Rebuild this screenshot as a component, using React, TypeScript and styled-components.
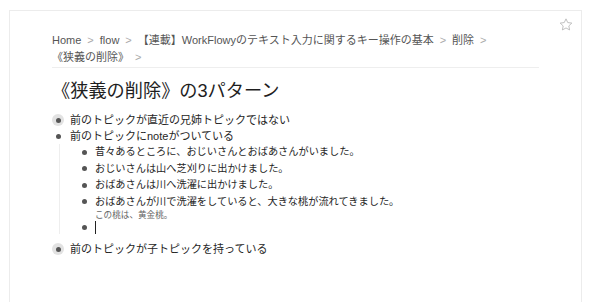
import React from "react";
import styled, { createGlobalStyle } from "styled-components";

const GlobalStyle = createGlobalStyle`
  body {
    margin: 0;
    background: #ffffff;
    font-family: "Liberation Sans", "Noto Sans CJK JP", sans-serif;
    color: #333;
  }
`;

const Page = styled.div`
  padding: 10px 16px 0 9px;
  height: 292px;
  overflow: hidden;
`;

const Panel = styled.div`
  border: 1px solid #ececec;
  border-bottom: none;
  height: 300px;
  padding: 0 8px 0 42px;
`;

const TopBar = styled.div`
  display: flex;
  justify-content: flex-end;
  padding-top: 7px;
  height: 13px;
`;

const Crumbs = styled.div`
  margin: 1px 34px 0 0;
  padding-bottom: 1px;
  border-bottom: 1px solid #eeeeee;
  font-size: 11px;
  line-height: 17px;
  color: #555;
`;

const Sep = styled.span`
  color: #aaa;
  margin: 0 6px;
`;

const Title = styled.h1`
  margin: 11px 0 0;
  font-size: 18.2px;
  line-height: 24px;
  font-weight: normal;
  color: #1e1e1e;
`;

const Outline = styled.div`
  margin-top: 9px;
`;

const Row = styled.div<{ $child?: boolean }>`
  display: flex;
  align-items: center;
  gap: ${(p) => (p.$child ? "5px" : "6px")};
  font-size: ${(p) => (p.$child ? "10.2px" : "11px")};
  line-height: ${(p) => (p.$child ? "16.5px" : "16px")};
  color: #262626;
`;

const Bullet = styled.span<{ $halo?: boolean }>`
  flex: none;
  width: 12px;
  height: 12px;
  border-radius: 50%;
  display: flex;
  align-items: center;
  justify-content: center;
  background: ${(p) => (p.$halo ? "#e2e2e2" : "transparent")};

  &::after {
    content: "";
    width: 5px;
    height: 5px;
    border-radius: 50%;
    background: #555;
  }
`;

const Children = styled.div`
  margin: 0 0 7px 7px;
  padding-left: 18px;
  border-left: 1px solid #eeeeee;
`;

const Note = styled.div`
  margin-left: 17px;
  font-size: 8.6px;
  line-height: 11px;
  color: #666;
`;

const Caret = styled.span`
  display: inline-block;
  width: 1px;
  height: 13px;
  background: #222;
`;

const Star = () => (
  <svg width="14" height="13" viewBox="0 0 24 23" fill="none" stroke="#b0b0b0" strokeWidth="1.4" strokeLinejoin="round">
    <path d="M12 1.5l3.1 6.6 7.2.9-5.3 5 1.4 7.1L12 17.6l-6.4 3.5L7 14l-5.3-5 7.2-.9z" />
  </svg>
);

const children = [
  "昔々あるところに、おじいさんとおばあさんがいました。",
  "おじいさんは山へ芝刈りに出かけました。",
  "おばあさんは川へ洗濯に出かけました。",
];

const App = () => {
  return (
    <>
      <GlobalStyle />
      <Page>
        <Panel>
          <TopBar>
            <Star />
          </TopBar>
          <Crumbs>
            Home<Sep>&gt;</Sep>flow<Sep>&gt;</Sep>【連載】WorkFlowyのテキスト入力に関するキー操作の基本<Sep>&gt;</Sep>削除<Sep>&gt;</Sep>
            <br />
            《狭義の削除》<Sep>&gt;</Sep>
          </Crumbs>
          <Title>《狭義の削除》の3パターン</Title>
          <Outline>
            <Row>
              <Bullet $halo />
              前のトピックが直近の兄姉トピックではない
            </Row>
            <Row>
              <Bullet />
              前のトピックにnoteがついている
            </Row>
            <Children>
              {children.map((t) => (
                <Row $child key={t}>
                  <Bullet />
                  {t}
                </Row>
              ))}
              <Row $child>
                <Bullet />
                おばあさんが川で洗濯をしていると、大きな桃が流れてきました。
              </Row>
              <Note>この桃は、黄金桃。</Note>
              <Row $child>
                <Bullet />
                <Caret />
              </Row>
            </Children>
            <Row>
              <Bullet $halo />
              前のトピックが子トピックを持っている
            </Row>
          </Outline>
        </Panel>
      </Page>
    </>
  );
};

export default App;
